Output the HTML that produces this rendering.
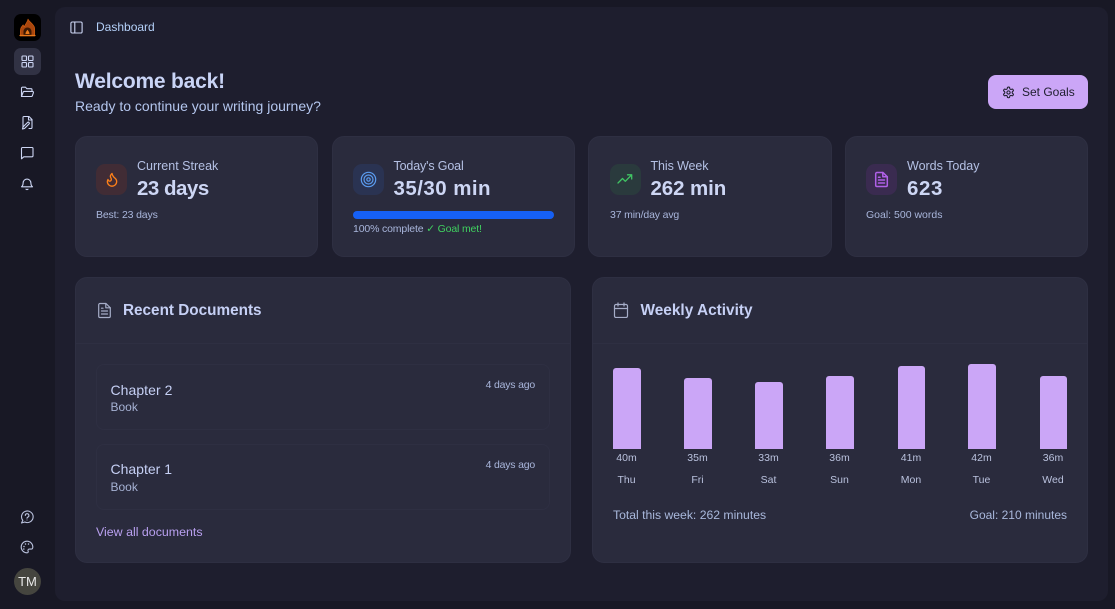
<!DOCTYPE html>
<html><head><meta charset="utf-8"><style>
html,body{margin:0;padding:0;width:1115px;height:609px;overflow:hidden;background:#181825;font-family:"Liberation Sans",sans-serif}
.a{position:absolute}
.t{position:absolute;white-space:nowrap;line-height:1}
.main{left:55px;top:7px;width:1053px;height:594px;background:#1e1e2e;border-radius:10px}
.card{position:absolute;background:#2a2b3d;border:1px solid #2e2f42;box-sizing:border-box;border-radius:12px}
.ic{position:absolute;width:31px;height:31px;border-radius:9px}
svg{position:absolute;fill:none;stroke-linecap:round;stroke-linejoin:round}
.lab{font-size:12.5px;color:#b4c0e4}
.val{font-size:20.5px;font-weight:700;color:#cdd6f4}
.sub{font-size:10.5px;color:#a9b6dc;letter-spacing:-.15px}
.bar{position:absolute;width:27.5px;background:#cba6f7;border-radius:3px 3px 0 0;top:auto;bottom:160px}
.m{font-size:10.5px;color:#bac2de;text-align:center;width:50px}
.d{font-size:10.5px;color:#bac2de;text-align:center;width:50px}
.doc{position:absolute;left:96px;width:454px;height:66px;border:1px solid #2e2f42;border-radius:8px;box-sizing:border-box}
</style></head><body>
<div class="a main"></div>

<!-- sidebar -->
<div class="a" style="left:14px;top:14px;width:27px;height:27px;background:#000;border-radius:7px"></div>
<svg style="left:14px;top:14px" width="27" height="27" viewBox="0 0 27 27"><path d="M14 5c.8 2.500 5.500 4.800 6.500 8.500.4 2 .2 5 .2 8.500H6.300c0-3.500-.2-6 .6-8 .5-1.300 1.500-2.200 2.300-3.200.3 1 .6 1.500 1 2C11 10.500 13.500 8 14 5z" fill="#a8460e" stroke="#d9620f" stroke-width=".6"/><path d="M9.500 21v-3.500a4 4 0 0 1 8 0V21z" fill="#3a1803"/><path d="M11.500 20c0-2 1-2.800 2-4.300 1 1.500 2 2.300 2 4.300z" fill="#e87a1c"/><path d="M6 21.500h15" stroke="#e87a1c" stroke-width="1.200"/></svg>
<div class="a" style="left:14px;top:48px;width:27px;height:27px;background:#313244;border-radius:7px"></div>
<svg style="left:21px;top:55px" width="13" height="13" viewBox="0 0 13 13" stroke="#cdd6f4" stroke-width="1.100"><rect x="1" y="1" width="4.500" height="4.500" rx=".7"/><rect x="7.500" y="1" width="4.500" height="4.500" rx=".7"/><rect x="1" y="7.500" width="4.500" height="4.500" rx=".7"/><rect x="7.500" y="7.500" width="4.500" height="4.500" rx=".7"/></svg>
<svg style="left:20px;top:85px" width="15" height="14" viewBox="0 0 15 14" stroke="#cdd6f4" stroke-width="1.100"><path d="M1.500 11.500v-8.300a1 1 0 0 1 1-1h3l1.300 1.500h4.200a1 1 0 0 1 1 1v1.200"/><path d="M1.500 11.500l1.700-4.500a1 1 0 0 1 .9-.6h8.400a1 1 0 0 1 .9 1.300l-1.100 3.200a1 1 0 0 1-.9.600h-9.900z"/></svg>
<svg style="left:20px;top:115px" width="14" height="15" viewBox="0 0 14 15" stroke="#cdd6f4" stroke-width="1.100"><path d="M3 12.500V2.500a1 1 0 0 1 1-1h5l3 3v8a1 1 0 0 1-1 1H9"/><path d="M8.500 1.500v3.500H12"/><path d="M7.500 7.500L3 12l-.5 2 2-.5 4.500-4.500a1 1 0 0 0-1.500-1.500z"/></svg>
<svg style="left:20px;top:146px" width="14" height="14" viewBox="0 0 14 14" stroke="#cdd6f4" stroke-width="1.100"><path d="M1.500 12.800V2.500a1 1 0 0 1 1-1h9.500a1 1 0 0 1 1 1v7.300a1 1 0 0 1-1 1H3.800z"/></svg>
<svg style="left:20px;top:176px" width="14" height="15" viewBox="0 0 14 15" stroke="#cdd6f4" stroke-width="1.100"><path d="M1.500 10.800c1-.8 1.600-1.500 1.600-3.800a3.900 3.900 0 0 1 7.800 0c0 2.300.6 3 1.600 3.800z"/><path d="M6 13.200c.5.500 1.500.5 2 0"/></svg>
<svg style="left:20px;top:510px" width="14" height="14" viewBox="0 0 14 14" stroke="#bac2de" stroke-width="1.100"><path d="M1.500 13l1.300-2.600A5.800 5.800 0 1 1 4.800 12z"/><path d="M5.300 5.500a1.800 1.800 0 1 1 2.400 1.700c-.5.200-.7.500-.7 1M7 10h.01"/></svg>
<svg style="left:20px;top:540px" width="14" height="14" viewBox="0 0 14 14" stroke="#bac2de" stroke-width="1.100"><path d="M7 1.200a5.800 5.800 0 1 0 0 11.600c1.200 0 1.500-.9 1.100-1.700-.5-1 .1-2 1.200-2h1.800c1 0 1.700-.7 1.700-2C12.800 3.800 10.200 1.200 7 1.200z"/><path d="M4 6.500h.01M5.500 4h.01M8.500 4h.01M3.800 9h.01" stroke-width="1.500"/></svg>
<div class="a" style="left:14px;top:568px;width:27px;height:27px;background:#45453f;border-radius:50%"></div>
<div class="t" style="left:14px;top:575px;width:27px;text-align:center;font-size:13px;color:#e8e8e8">TM</div>

<!-- header -->
<svg style="left:70px;top:21px" width="13" height="13" viewBox="0 0 13 13" stroke="#cdd6f4" stroke-width="1.100"><rect x=".9" y="1" width="11.200" height="11" rx="1.300"/><path d="M4.800 1v11"/></svg>
<div class="t" style="left:96px;top:21px;font-size:12px;color:#b4d0f8">Dashboard</div>

<div class="t" style="left:75px;top:71px;font-size:21px;font-weight:700;color:#c9d4f6;letter-spacing:-.2px">Welcome back!</div>
<div class="t" style="left:75px;top:99px;font-size:14px;color:#b4c6ee">Ready to continue your writing journey?</div>

<div class="a" style="left:988px;top:75px;width:100px;height:34px;background:#cba6f7;border-radius:8px"></div>
<svg style="left:1002px;top:85.500px" width="13" height="13" viewBox="0 0 24 24" stroke="#1e1e2e" stroke-width="2"><path d="M12.200 2h-.4a2 2 0 0 0-2 2v.2a2 2 0 0 1-1 1.700l-.4.2a2 2 0 0 1-2 0l-.2-.1a2 2 0 0 0-2.700.7l-.2.4a2 2 0 0 0 .7 2.700l.2.100a2 2 0 0 1 1 1.700v.5a2 2 0 0 1-1 1.700l-.2.100a2 2 0 0 0-.7 2.700l.2.400a2 2 0 0 0 2.700.7l.2-.1a2 2 0 0 1 2 0l.4.2a2 2 0 0 1 1 1.700v.2a2 2 0 0 0 2 2h.4a2 2 0 0 0 2-2v-.2a2 2 0 0 1 1-1.700l.4-.2a2 2 0 0 1 2 0l.2.100a2 2 0 0 0 2.700-.7l.2-.4a2 2 0 0 0-.7-2.700l-.2-.1a2 2 0 0 1-1-1.700v-.5a2 2 0 0 1 1-1.700l.2-.1a2 2 0 0 0 .7-2.700l-.2-.4a2 2 0 0 0-2.700-.7l-.2.1a2 2 0 0 1-2 0l-.4-.2a2 2 0 0 1-1-1.700V4a2 2 0 0 0-2-2z"/><circle cx="12" cy="12" r="3"/></svg>
<div class="t" style="left:1022px;top:86px;font-size:12px;color:#1e1e2e">Set Goals</div>

<!-- stat cards -->
<div class="card" style="left:75px;top:136px;width:243px;height:121px"></div>
<div class="card" style="left:331.500px;top:136px;width:243.500px;height:121px"></div>
<div class="card" style="left:588px;top:136px;width:244px;height:121px"></div>
<div class="card" style="left:845px;top:136px;width:243px;height:121px"></div>

<div class="ic" style="left:96px;top:164px;background:#412c35"></div>
<svg style="left:103.500px;top:171px" width="16" height="17" viewBox="0 0 24 24" stroke="#fe8019" stroke-width="2"><path d="M8.500 14.500A2.500 2.500 0 0 0 11 12c0-1.400-.5-2-1-3-1.100-2.100-.2-4 2-6 .5 2.500 2 4.900 4 6.500 2 1.600 3 3.500 3 5.500a7 7 0 1 1-14 0c0-1.200.4-2.300 1-3a2.500 2.500 0 0 0 2.500 2.500z"/></svg>
<div class="t lab" style="left:137px;top:160px">Current Streak</div>
<div class="t val" style="left:137px;top:179px;letter-spacing:-.5px">23 days</div>
<div class="t sub" style="left:96px;top:210px">Best: 23 days</div>

<div class="ic" style="left:353px;top:164px;background:#2a3352"></div>
<svg style="left:360px;top:171px" width="17" height="17" viewBox="0 0 17 17" stroke="#5b9cf0" stroke-width="1.200"><circle cx="8.500" cy="8.500" r="7.200"/><circle cx="8.500" cy="8.500" r="4.500"/><circle cx="8.500" cy="8.500" r="1.700"/></svg>
<div class="t lab" style="left:393.500px;top:160px;letter-spacing:-.15px">Today's Goal</div>
<div class="t val" style="left:393.500px;top:179px;letter-spacing:.45px">35/30 min</div>
<div class="a" style="left:353px;top:211px;width:200.500px;height:7.500px;background:#1660f5;border-radius:4px"></div>
<div class="t sub" style="left:353px;top:223.500px">100% complete <span style="color:#40d060">✓ Goal met!</span></div>

<div class="ic" style="left:610px;top:164px;background:#2a3a3d"></div>
<svg style="left:617px;top:173px" width="16" height="12" viewBox="0 0 16 12" stroke="#40c463" stroke-width="1.300"><path d="M1 10l4.500-4.500 2.800 2.800L14.500 2M10.500 1.800h4.200V6"/></svg>
<div class="t lab" style="left:650.500px;top:160px;letter-spacing:-.1px">This Week</div>
<div class="t val" style="left:650.500px;top:179px;letter-spacing:-.1px">262 min</div>
<div class="t sub" style="left:610px;top:210px">37 min/day avg</div>

<div class="ic" style="left:866px;top:164px;background:#3a2b50"></div>
<svg style="left:874px;top:171px" width="15" height="17" viewBox="0 0 15 17" stroke="#b060e8" stroke-width="1.500"><path d="M9 1.500H3a1.300 1.300 0 0 0-1.300 1.300v11.400A1.300 1.300 0 0 0 3 15.500h9a1.300 1.300 0 0 0 1.300-1.300V5.800z"/><path d="M8.800 1.500v4.300h4.500M4.500 6.200h1.500M4.500 9h6M4.500 12h6"/></svg>
<div class="t lab" style="left:907px;top:160px">Words Today</div>
<div class="t val" style="left:907px;top:179px;letter-spacing:.6px">623</div>
<div class="t sub" style="left:866px;top:210px;letter-spacing:0">Goal: 500 words</div>

<!-- recent docs -->
<div class="card" style="left:75px;top:277px;width:496px;height:286px"></div>
<div class="a" style="left:76px;top:343px;width:494px;height:1px;background:#2e2f42"></div>
<svg style="left:97px;top:302px" width="15" height="17" viewBox="0 0 15 17" stroke="#a6adc8" stroke-width="1.200"><path d="M9 1.500H3a1.300 1.300 0 0 0-1.300 1.300v11.400A1.300 1.300 0 0 0 3 15.500h9a1.300 1.300 0 0 0 1.300-1.300V5.800z"/><path d="M8.800 1.500v4.300h4.500M4.500 6.200h1.500M4.500 9h6M4.500 12h6"/></svg>
<div class="t" style="left:123px;top:303px;font-size:15.300px;font-weight:700;color:#c6d0f5">Recent Documents</div>

<div class="doc" style="top:364px"></div>
<div class="t" style="left:110.500px;top:382.500px;font-size:14px;color:#c6d0f5;letter-spacing:.05px">Chapter 2</div>
<div class="t" style="left:110.500px;top:401px;font-size:12px;color:#a6b2d4">Book</div>
<div class="t sub" style="right:580px;top:380px;letter-spacing:-.2px">4 days ago</div>

<div class="doc" style="top:444px"></div>
<div class="t" style="left:110.500px;top:462px;font-size:14px;color:#c6d0f5">Chapter 1</div>
<div class="t" style="left:110.500px;top:481px;font-size:12px;color:#a6b2d4">Book</div>
<div class="t sub" style="right:580px;top:460px;letter-spacing:-.2px">4 days ago</div>

<div class="t" style="left:96px;top:526px;font-size:12.400px;color:#b9a0f0">View all documents</div>

<!-- weekly -->
<div class="card" style="left:591.500px;top:277px;width:496.500px;height:286px"></div>
<div class="a" style="left:593px;top:343px;width:494px;height:1px;background:#2e2f42"></div>
<svg style="left:613px;top:302px" width="16" height="16" viewBox="0 0 16 16" stroke="#a6adc8" stroke-width="1.200"><rect x="1.500" y="2.500" width="13" height="13" rx="1.500"/><path d="M5 1v3M11 1v3M1.500 6.500h13"/></svg>
<div class="t" style="left:640.500px;top:303px;font-size:15.400px;font-weight:700;color:#c6d0f5">Weekly Activity</div>

<div class="bar" style="left:613px;height:81px"></div>
<div class="bar" style="left:684px;height:71px"></div>
<div class="bar" style="left:755px;height:67px"></div>
<div class="bar" style="left:826px;height:73px"></div>
<div class="bar" style="left:897.500px;height:83px"></div>
<div class="bar" style="left:968px;height:85px"></div>
<div class="bar" style="left:1039.500px;height:73px"></div>

<div class="t m" style="left:601.500px;top:453px">40m</div>
<div class="t m" style="left:672.500px;top:453px">35m</div>
<div class="t m" style="left:743.500px;top:453px">33m</div>
<div class="t m" style="left:814.500px;top:453px">36m</div>
<div class="t m" style="left:886px;top:453px">41m</div>
<div class="t m" style="left:956.500px;top:453px">42m</div>
<div class="t m" style="left:1028px;top:453px">36m</div>
<div class="t d" style="left:601.500px;top:474.500px">Thu</div>
<div class="t d" style="left:672.500px;top:474.500px">Fri</div>
<div class="t d" style="left:743.500px;top:474.500px">Sat</div>
<div class="t d" style="left:814.500px;top:474.500px">Sun</div>
<div class="t d" style="left:886px;top:474.500px">Mon</div>
<div class="t d" style="left:956.500px;top:474.500px">Tue</div>
<div class="t d" style="left:1028px;top:474.500px">Wed</div>

<div class="t" style="left:613px;top:509px;font-size:12.200px;color:#a9b8dc">Total this week: 262 minutes</div>
<div class="t" style="right:48px;top:509px;font-size:12px;color:#a9b8dc">Goal: 210 minutes</div>
</body></html>
